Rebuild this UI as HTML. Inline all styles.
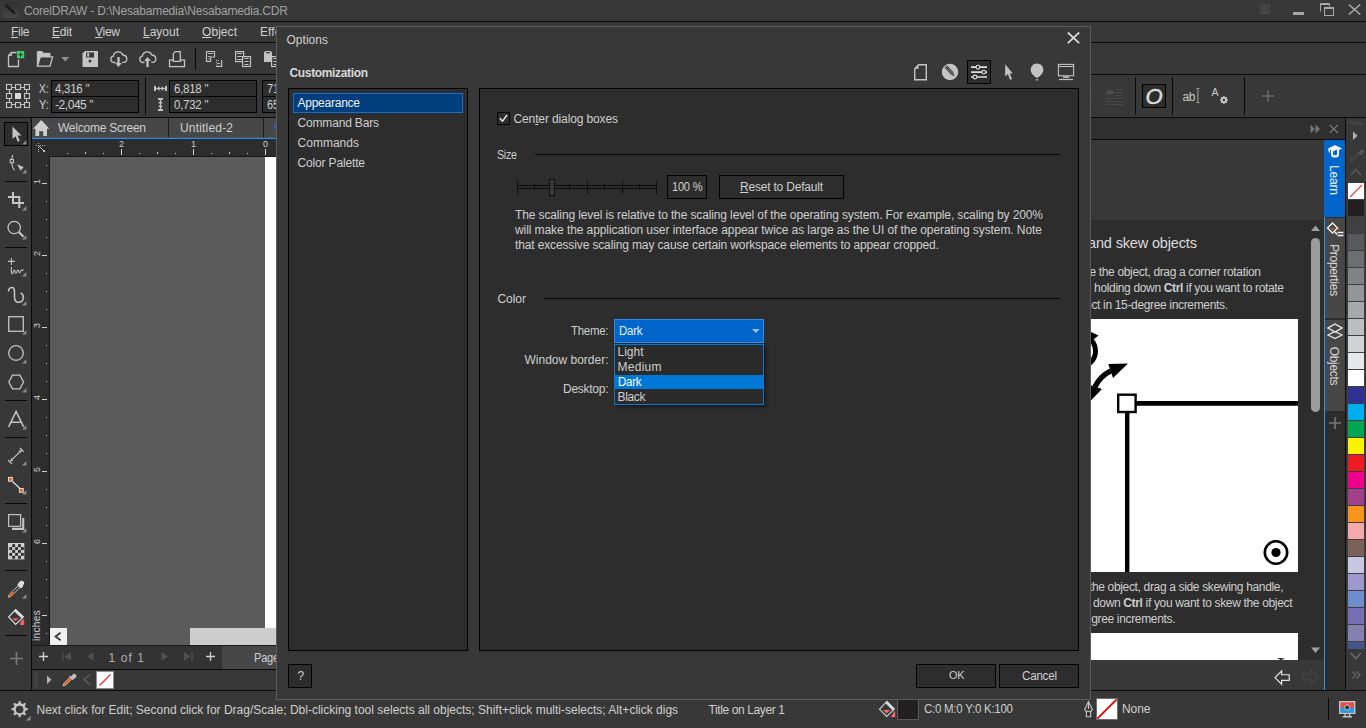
<!DOCTYPE html>
<html lang="en"><head><meta charset="utf-8"><title>CorelDRAW Options</title>
<style>

*{margin:0;padding:0;box-sizing:border-box}
html,body{width:1366px;height:728px;overflow:hidden;background:#383838;font-family:"Liberation Sans",sans-serif;font-size:12px;color:#d4d4d4}
.a{position:absolute}
.t{position:absolute;white-space:nowrap;line-height:1}
.ln{position:absolute;background:#0a0a0a}
.box{position:absolute;border:1px solid #020202;background:#2d2d2d}
svg{position:absolute;overflow:visible}
u{text-decoration:underline;text-underline-offset:1px}
#dlg{position:absolute;left:277px;top:27px;width:814px;height:672px;background:#383838;border:1px solid #5c5c5c}
#docker{position:absolute;left:1091px;top:118px;width:234px;height:572px;overflow:hidden}

</style></head>
<body>

<div class="a" id="app" style="left:0;top:0;width:1366px;height:728px">
<!-- horizontal separators -->
<div class="ln" style="left:0;top:21px;width:1366px;height:1px"></div>
<div class="ln" style="left:0;top:42px;width:1366px;height:1px"></div>
<div class="ln" style="left:0;top:74px;width:1366px;height:1px"></div>
<div class="ln" style="left:0;top:117px;width:1366px;height:1px"></div>
<div class="ln" style="left:0;top:690px;width:1366px;height:1px"></div>
<!-- title bar icon -->
<svg style="left:3px;top:2px" width="16" height="16" viewBox="0 0 16 16"><defs><linearGradient id="ig" x1="0" y1="0" x2="0" y2="1"><stop offset="0" stop-color="#2f2f2f"/><stop offset="1" stop-color="#484848"/></linearGradient></defs><path d="M4 0.200h11.600v11.800a3.800 3.800 0 0 1-3.800 3.800h-7.800a3.800 3.800 0 0 1-3.800-3.800v-8a3.800 3.800 0 0 1 3.800-3.800z" fill="url(#ig)"/><path d="M3.800 3.900l7.200 6.900" stroke="#1b1b1b" stroke-width="2.600" stroke-linecap="round"/></svg>
<!-- window controls -->
<svg style="left:1260px;top:4px" width="11" height="11" viewBox="0 0 11 11"><rect x="0.5" y="0.5" width="9" height="9" fill="#404040" stroke="#474747"/><circle cx="4.5" cy="4" r="1.5" fill="#4c4c4c"/><path d="M1.5 9c0-3 6-3 6 0z" fill="#4c4c4c"/></svg>
<div class="a" style="left:1293px;top:12px;width:11px;height:3px;background:#a6a6a6"></div>
<svg style="left:1320px;top:3px" width="14" height="13" viewBox="0 0 14 13"><path d="M0.5 8.5v-8h9v3M0.5 1.5h9" fill="none" stroke="#a8a8a8" stroke-width="1"/><path d="M0.5 1.2h9" stroke="#a8a8a8" stroke-width="1.6"/><rect x="4.5" y="4.5" width="9" height="8" fill="#383838" stroke="#a8a8a8"/><path d="M4.5 5.2h9" stroke="#a8a8a8" stroke-width="1.6"/></svg>
<svg style="left:1348px;top:4px" width="13" height="11" viewBox="0 0 13 11"><path d="M0.8 0.5l11.4 10M12.2 0.5l-11.4 10" stroke="#ababab" stroke-width="1.600" fill="none"/></svg>

<!-- new -->
<svg style="left:7px;top:50px" width="18" height="18" viewBox="0 0 18 18"><path d="M9.5 2.500h-5l-3 3v11h10v-7" fill="none" stroke="#c4c4c4" stroke-width="1.300"/><path d="M1.500 5.500h3v-3" fill="none" stroke="#c4c4c4" stroke-width="1"/><rect x="10" y="1" width="7.200" height="7.200" fill="#3bd66c"/><path d="M13.600 2.300v4.600M11.300 4.600h4.600" stroke="#1c3a26" stroke-width="1.100"/></svg>
<!-- open -->
<svg style="left:36px;top:50px" width="18" height="18" viewBox="0 0 18 18"><path d="M1.300 16.300v-14.800h4.700l1.700 1.800h6.300v3.500" fill="#c6c6c6" stroke="#c4c4c4" stroke-width="1"/><path d="M1.500 16.200l2.800-9.300h12.300l-2.600 9.300z" fill="#383838" stroke="#c4c4c4" stroke-width="1.300"/></svg>
<svg style="left:61px;top:57px" width="9" height="5" viewBox="0 0 9 5"><path d="M0 0h8.4l-4.2 4.4z" fill="#8e8e8e"/></svg>
<!-- save -->
<svg style="left:82px;top:50px" width="17" height="18" viewBox="0 0 17 18"><path d="M3 1h13v16h-15.500v-13.500z" fill="#c4c4c4"/><rect x="4" y="2.5" width="8" height="5" fill="#383838"/><rect x="5.2" y="3.2" width="2" height="3.4" fill="#c4c4c4"/><circle cx="8" cy="11" r="1.5" fill="#383838"/></svg>
<!-- cloud down -->
<svg style="left:110px;top:50px" width="18" height="18" viewBox="0 0 18 18"><path d="M5.5 12.5h-1.8a3.2 3.2 0 0 1-.4-6.3a5 5 0 0 1 9.6-1.2a3.8 3.8 0 0 1 1.3 7.4h-2" fill="none" stroke="#c4c4c4" stroke-width="1.3"/><path d="M8.500 7v7" stroke="#c4c4c4" stroke-width="2.300"/><path d="M5.2 13h6.6l-3.3 4z" fill="#c4c4c4"/></svg>
<!-- cloud up -->
<svg style="left:139px;top:50px" width="18" height="18" viewBox="0 0 18 18"><path d="M5.5 12.5h-1.8a3.2 3.2 0 0 1-.4-6.3a5 5 0 0 1 9.6-1.2a3.8 3.8 0 0 1 1.3 7.4h-2" fill="none" stroke="#c4c4c4" stroke-width="1.3"/><path d="M8.500 10v7" stroke="#c4c4c4" stroke-width="2.300"/><path d="M5.2 11h6.6l-3.3 -4z" fill="#c4c4c4"/></svg>
<!-- print/export -->
<svg style="left:168px;top:50px" width="18" height="18" viewBox="0 0 18 18"><rect x="1.500" y="10" width="15" height="6.600" fill="none" stroke="#c4c4c4" stroke-width="1.300"/><path d="M5.300 11.300v-7.800l2.200-1.900h4.800v9.700z" fill="#383838" stroke="#c4c4c4" stroke-width="1.300"/></svg>
<div class="ln" style="left:195px;top:48px;width:1px;height:22px"></div>
<!-- cut-ish -->
<svg style="left:205px;top:50px" width="18" height="18" viewBox="0 0 18 18"><path d="M1.500 11.500v-10h8v5.500h-4v4.500z" fill="none" stroke="#c4c4c4" stroke-width="1.200"/><path d="M3.200 3.500h4.600M3.200 6.500h2M3.200 9h1.200" stroke="#c4c4c4" stroke-width="1"/><path d="M16.700 10v6.400h-5.700" fill="none" stroke="#c4c4c4" stroke-width="1.200"/><path d="M11 10.500h4M11.500 12v2.500" stroke="#c4c4c4" stroke-width="1" stroke-dasharray="1 1"/><path d="M12 13.500h3" stroke="#c4c4c4" stroke-width="1"/></svg>
<!-- copy -->
<svg style="left:235px;top:50px" width="17" height="18" viewBox="0 0 17 18"><rect x="0.600" y="1.600" width="8" height="10" fill="#383838" stroke="#c4c4c4" stroke-width="1.200"/><path d="M2.300 3.500h4.500M2.300 6.500h4.500M2.300 9.500h4.500" stroke="#c4c4c4" stroke-width="1"/><rect x="7.600" y="6.600" width="7.900" height="9.900" fill="#383838" stroke="#c4c4c4" stroke-width="1.200"/><path d="M9.500 8.500h4.200M9.500 11.500h4.200M9.500 14.500h4.200" stroke="#c4c4c4" stroke-width="1"/></svg>
<!-- paste -->
<svg style="left:264px;top:50px" width="17" height="18" viewBox="0 0 17 18"><path d="M0 3c0-1.500 1-2 4-2s4 .5 4 2v9h-8z" fill="#c4c4c4"/><path d="M2 2.700h4" stroke="#383838" stroke-width="1.200"/><rect x="7.600" y="6.600" width="7.900" height="9.900" fill="#383838" stroke="#c4c4c4" stroke-width="1.200"/><path d="M9.500 8.500h4.200M9.500 11.500h4.200M9.500 14.500h4.200" stroke="#c4c4c4" stroke-width="1"/></svg>

<svg style="left:6px;top:84px" width="25" height="25" viewBox="0 0 25 25"><g fill="#383838" stroke="#c4c4c4" stroke-width="1.100"><path d="M3.500 3.500h17v17h-17z" fill="none" stroke-width="1"/><rect x="0.5" y="0.5" width="5" height="5"/><rect x="9.5" y="0.5" width="5" height="5"/><rect x="18.5" y="0.5" width="5" height="5"/><rect x="0.5" y="9.5" width="5" height="5"/><rect x="9.0" y="9.0" width="6" height="6" fill="#d8d8d8" stroke="none"/><rect x="18.5" y="9.5" width="5" height="5"/><rect x="0.5" y="18.5" width="5" height="5"/><rect x="9.5" y="18.5" width="5" height="5"/><rect x="18.5" y="18.5" width="5" height="5"/></g></svg>
<div class="box" style="left:51px;top:80px;width:88px;height:17px"></div>
<div class="box" style="left:51px;top:96px;width:88px;height:17px"></div>
<div class="ln" style="left:145px;top:77px;width:1px;height:38px"></div>
<svg style="left:154px;top:86px" width="13" height="5" viewBox="0 0 13 5"><path d="M0 0h2v5h-2zM11 0h2v5h-2zM2.200 2.500l3.300-2.300v4.600zM10.800 2.500l-3.300-2.300v4.600z" fill="#c4c4c4"/><path d="M2 2.500h9" stroke="#c4c4c4" stroke-width="1"/></svg>
<svg style="left:158px;top:98px" width="5" height="13" viewBox="0 0 5 13"><path d="M0 0h5v2h-5zM0 11h5v2h-5zM2.500 2.200l-2.300 3.300h4.600zM2.500 10.800l-2.300-3.300h4.600z" fill="#c4c4c4"/><path d="M2.500 2v9" stroke="#c4c4c4" stroke-width="1"/></svg>
<div class="box" style="left:169px;top:80px;width:88px;height:17px"></div>
<div class="box" style="left:169px;top:96px;width:88px;height:17px"></div>
<div class="box" style="left:262px;top:80px;width:40px;height:17px"></div>
<div class="box" style="left:262px;top:96px;width:40px;height:17px"></div>

<div class="ln" style="left:31px;top:118px;width:1px;height:572px"></div>
<div class="box" style="left:4px;top:122px;width:24px;height:24px"></div>
<!-- pick -->
<svg style="left:12px;top:126px" width="10" height="17" viewBox="0 0 10 17"><path d="M0.500 0.500v12.500l3-2.800l2.300 5.600l2-0.900l-2.300-5.400h4z" fill="#c4c4c4"/></svg>
<svg style="left:22.4px;top:140.4px" width="5" height="5" viewBox="0 0 5 5"><path d="M4.400 0v4.400h-4.400z" fill="#8c8c8c"/></svg>
<!-- shape -->
<svg style="left:8px;top:154px" width="20" height="18" viewBox="0 0 20 18"><path d="M4.700 1c-1.800 5-1.200 11 1.800 15.400" fill="none" stroke="#c4c4c4" stroke-width="1.100"/><rect x="2.300" y="5.500" width="3.200" height="3.200" fill="#383838" stroke="#c4c4c4" stroke-width="1.100"/><path d="M9.100 10.300l6.600 2.600l-3.100 3.900z" fill="#c4c4c4"/></svg>
<svg style="left:22.4px;top:169.4px" width="5" height="5" viewBox="0 0 5 5"><path d="M4.400 0v4.400h-4.400z" fill="#8c8c8c"/></svg>
<div class="ln" style="left:5px;top:181px;width:22px;height:1px"></div>
<!-- crop -->
<svg style="left:7px;top:192px" width="18" height="16" viewBox="0 0 18 16"><path d="M6 0v11h11M1 5h11.300v11" fill="none" stroke="#c4c4c4" stroke-width="2"/></svg>
<svg style="left:22.4px;top:206.4px" width="5" height="5" viewBox="0 0 5 5"><path d="M4.400 0v4.400h-4.400z" fill="#8c8c8c"/></svg>
<!-- zoom -->
<svg style="left:7px;top:220px" width="18" height="18" viewBox="0 0 18 18"><circle cx="7.200" cy="7.500" r="6.200" fill="none" stroke="#c4c4c4" stroke-width="1.300"/><path d="M11.800 12l4.700 4.700" stroke="#c4c4c4" stroke-width="2.200"/></svg>
<svg style="left:22.4px;top:235.4px" width="5" height="5" viewBox="0 0 5 5"><path d="M4.400 0v4.400h-4.400z" fill="#8c8c8c"/></svg>
<div class="ln" style="left:5px;top:247px;width:22px;height:1px"></div>
<!-- freehand -->
<svg style="left:8px;top:258px" width="18" height="18" viewBox="0 0 18 18"><path d="M3.400 0v7M0 3.400h7" stroke="#c4c4c4" stroke-width="1.100"/><path d="M3.400 9v5.500c0 1.600 1.700 1.600 1.800 0c.1-3 1.800-3 1.900-.5c.1 1.600 1.500 1.600 1.700 0c.3-2.600 1.800-2.600 2 -.3c.2 1.300 1.400 1.300 1.700 0c.4-2 1.700-2.300 3-1.200" fill="none" stroke="#c4c4c4" stroke-width="1.100"/></svg>
<svg style="left:22.4px;top:272.4px" width="5" height="5" viewBox="0 0 5 5"><path d="M4.400 0v4.400h-4.400z" fill="#8c8c8c"/></svg>
<!-- artistic media -->
<svg style="left:8px;top:287px" width="17" height="18" viewBox="0 0 17 18"><path d="M0.500 4.500C0.500 1.500 2.500 0.500 4 0.500C6 0.500 6.500 3 6.500 5L6.500 10C6.500 13.500 8 15.300 10.500 15.300C13.500 15.300 15.300 13 15.300 10.500C15.300 8 14 6.500 12.600 6" fill="none" stroke="#c4c4c4" stroke-width="1.600"/></svg>
<svg style="left:22.4px;top:301.4px" width="5" height="5" viewBox="0 0 5 5"><path d="M4.400 0v4.400h-4.400z" fill="#8c8c8c"/></svg>
<!-- rectangle -->
<svg style="left:8px;top:316px" width="16" height="16" viewBox="0 0 16 16"><rect x="0.700" y="0.700" width="14.600" height="14.600" fill="none" stroke="#c4c4c4" stroke-width="1.300"/></svg>
<svg style="left:22.4px;top:330.4px" width="5" height="5" viewBox="0 0 5 5"><path d="M4.400 0v4.400h-4.400z" fill="#8c8c8c"/></svg>
<!-- ellipse -->
<svg style="left:8px;top:345px" width="17" height="17" viewBox="0 0 17 17"><circle cx="8" cy="8" r="7.300" fill="none" stroke="#c4c4c4" stroke-width="1.300"/></svg>
<svg style="left:22.4px;top:359.4px" width="5" height="5" viewBox="0 0 5 5"><path d="M4.400 0v4.400h-4.400z" fill="#8c8c8c"/></svg>
<!-- polygon -->
<svg style="left:8px;top:374px" width="17" height="17" viewBox="0 0 17 17"><path d="M0.800 8l3.700-6.800h7.400l3.700 6.800l-3.700 6.800h-7.400z" fill="none" stroke="#c4c4c4" stroke-width="1.300"/></svg>
<svg style="left:22.4px;top:388.4px" width="5" height="5" viewBox="0 0 5 5"><path d="M4.400 0v4.400h-4.400z" fill="#8c8c8c"/></svg>
<div class="ln" style="left:5px;top:400px;width:22px;height:1px"></div>
<!-- text -->
<svg style="left:8px;top:411px" width="17" height="18" viewBox="0 0 17 18"><path d="M0.600 15.800l7.500-15.400l7.500 15.400M3.200 11.300h10" fill="none" stroke="#c4c4c4" stroke-width="1.500"/></svg>
<svg style="left:22.4px;top:425.4px" width="5" height="5" viewBox="0 0 5 5"><path d="M4.400 0v4.400h-4.400z" fill="#8c8c8c"/></svg>
<div class="ln" style="left:5px;top:437px;width:22px;height:1px"></div>
<!-- dimension -->
<svg style="left:8px;top:447px" width="17" height="18" viewBox="0 0 17 18"><path d="M2.500 14.100l11-11" stroke="#c4c4c4" stroke-width="1.200"/><path d="M0.100 13.200l3.800 3.500M12 1l3.700 3.900" stroke="#c4c4c4" stroke-width="1.300"/><path d="M2.500 14.100l.6-3l2.400 2.400zM13.500 3.100l-.6 3l-2.400-2.400z" fill="#c4c4c4"/></svg>
<svg style="left:22.4px;top:461.4px" width="5" height="5" viewBox="0 0 5 5"><path d="M4.400 0v4.400h-4.400z" fill="#8c8c8c"/></svg>
<!-- connector -->
<svg style="left:8px;top:476px" width="17" height="18" viewBox="0 0 17 18"><path d="M4.500 5.500l7.500 7" stroke="#e0e0e0" stroke-width="1.200"/><rect x="0.600" y="1.400" width="3.800" height="3.800" fill="#f25a0c" stroke="#e0e0e0" stroke-width="1"/><rect x="11.400" y="12.500" width="3.800" height="3.800" fill="#f25a0c" stroke="#e0e0e0" stroke-width="1"/></svg>
<svg style="left:22.4px;top:490.4px" width="5" height="5" viewBox="0 0 5 5"><path d="M4.400 0v4.400h-4.400z" fill="#8c8c8c"/></svg>
<div class="ln" style="left:5px;top:503px;width:22px;height:1px"></div>
<!-- shadow -->
<svg style="left:7.900px;top:514.100px" width="17" height="16" viewBox="0 0 17 16"><path d="M15.200 3.900v10.950h-11.200" fill="none" stroke="#c4c4c4" stroke-width="2.100"/><rect x="0.600" y="0.600" width="12" height="11.700" fill="#383838" stroke="#c4c4c4" stroke-width="1.200"/></svg>
<svg style="left:22.4px;top:528.4px" width="5" height="5" viewBox="0 0 5 5"><path d="M4.400 0v4.400h-4.400z" fill="#8c8c8c"/></svg>
<!-- transparency -->
<svg style="left:7.900px;top:542.800px" width="17" height="17" viewBox="0 0 17 17"><rect x="0" y="0" width="16.300" height="16.400" fill="#cfcfcf"/><g fill="#2e2e2e"><rect x="4.20" y="1.20" width="2.900" height="2.900"/><rect x="10.00" y="1.20" width="2.900" height="2.900"/><rect x="1.30" y="4.10" width="2.900" height="2.900"/><rect x="7.10" y="4.10" width="2.900" height="2.900"/><rect x="12.90" y="4.10" width="2.900" height="2.900"/><rect x="4.20" y="7.00" width="2.900" height="2.900"/><rect x="10.00" y="7.00" width="2.900" height="2.900"/><rect x="1.30" y="9.90" width="2.900" height="2.900"/><rect x="7.10" y="9.90" width="2.900" height="2.900"/><rect x="12.90" y="9.90" width="2.900" height="2.900"/><rect x="4.20" y="12.80" width="2.900" height="2.900"/><rect x="10.00" y="12.80" width="2.900" height="2.900"/></g></svg>
<div class="ln" style="left:5px;top:570px;width:22px;height:1px"></div>
<!-- eyedropper -->
<svg style="left:8px;top:580px" width="17" height="18" viewBox="0 0 17 18"><path d="M0.400 17.200l.8-2.600l8.800-8.800l1.800 1.800l-8.800 8.800z" fill="#383838" stroke="#dedede" stroke-width=".9"/><path d="M0.900 16.700l.7-2l3.200-3.200l1.400 1.400l-3.200 3.200z" fill="#f25a0c"/><path d="M9.300 4.500l3-3.400c1.500-1 3.800 0 3.900 1.500c.1 1.200-.5 1.800-1 2.300l-.2 1.500l-2 2z" fill="#dedede"/></svg>
<svg style="left:22.4px;top:594.4px" width="5" height="5" viewBox="0 0 5 5"><path d="M4.400 0v4.400h-4.400z" fill="#8c8c8c"/></svg>
<!-- fill -->
<svg style="left:8px;top:609px" width="18" height="19" viewBox="0 0 18 19"><path d="M7.600 0.600l7.700 7.400l-7.700 7.400l-7-7.400z" fill="none" stroke="#dcdcdc" stroke-width="1.100"/><path d="M7 1.200l7.800 7.400" stroke="#dcdcdc" stroke-width="2.800"/><path d="M3.900 9.200h7l-3.500 2.800z" fill="#f26464"/><path d="M12.400 12.800l3.800-3.300v6.500h-4.200z" fill="#f26464"/></svg>
<div class="ln" style="left:5px;top:635px;width:22px;height:1px"></div>
<svg style="left:10px;top:652px" width="13" height="13" viewBox="0 0 13 13"><path d="M6.500 0v13M0 6.500h13" stroke="#777" stroke-width="1.700"/></svg>

<!-- tab row -->
<div class="a" style="left:32px;top:118px;width:251px;height:20px;background:#474747"></div>
<div class="a" style="left:168px;top:118px;width:1px;height:21px;background:#1c1c1c"></div>
<div class="a" style="left:263px;top:118px;width:1px;height:21px;background:#1c1c1c"></div>
<div class="a" style="left:32px;top:138px;width:251px;height:1px;background:#2c8ae8"></div>
<div class="a" style="left:32px;top:137px;width:251px;height:1px;background:#3a6ea8;opacity:.4"></div>
<div class="a" style="left:274px;top:123px;width:2px;height:6px;background:#3d5e9e"></div>
<svg style="left:33px;top:120px" width="17" height="16" viewBox="0 0 17 16"><path d="M8.200 0l8.200 8.800h-2.400v7.200h-3.800v-4.800h-4v4.800h-3.800v-7.200h-2.400z" fill="#cdcdcd"/></svg>
<!-- rulers -->
<div class="a" style="left:32px;top:139px;width:251px;height:17px;background:#2d2d2d"></div>
<div class="a" style="left:32px;top:139px;width:17px;height:507px;background:#2d2d2d"></div>
<div class="a" style="left:49px;top:156px;width:234px;height:1px;background:#161616"></div>
<div class="a" style="left:49px;top:156px;width:1px;height:490px;background:#161616"></div>
<svg style="left:36px;top:143px" width="11" height="11" viewBox="0 0 11 11"><path d="M2.500 0v10M0 2.500h10" stroke="#a8a8a8" stroke-width="1" stroke-dasharray="1 1"/><path d="M2.500 2.500l5 5" stroke="#c4c4c4" stroke-width="1"/><rect x="7" y="7" width="2" height="2" fill="#c4c4c4"/></svg>
<!-- canvas -->
<div class="a" style="left:50px;top:157px;width:233px;height:471px;background:#5b5b5b"></div>
<div class="a" style="left:265px;top:157px;width:18px;height:471px;background:#fff"></div>
<!-- h scrollbar -->
<div class="a" style="left:50px;top:628px;width:233px;height:17px;background:#5b5b5b"></div>
<div class="a" style="left:50px;top:628px;width:17px;height:17px;background:#f0f0f0"></div>
<svg style="left:54px;top:632px" width="8" height="9" viewBox="0 0 8 9"><path d="M6.500 0.800l-5 3.700l5 3.700" fill="none" stroke="#333" stroke-width="1.700"/></svg>
<div class="a" style="left:190px;top:628px;width:93px;height:17px;background:#cdcdcd"></div>
<div class="ln" style="left:32px;top:645px;width:251px;height:1px;background:#1a1a1a"></div>
<!-- page nav -->
<div class="a" style="left:32px;top:646px;width:190px;height:23px;background:#333"></div>
<div class="a" style="left:222px;top:646px;width:60px;height:23px;background:#474747"></div>
<div class="ln" style="left:32px;top:669px;width:251px;height:1px"></div>
<svg style="left:39px;top:652px" width="10" height="10" viewBox="0 0 10 10"><path d="M4.500 0v9M0 4.500h9" stroke="#d0d0d0" stroke-width="1.300"/></svg>
<svg style="left:62px;top:652px" width="10" height="10" viewBox="0 0 10 10"><path d="M1 0v9" stroke="#505050" stroke-width="1.300"/><path d="M9 0v9l-6.500-4.500z" fill="#505050"/></svg>
<svg style="left:87px;top:652px" width="7" height="10" viewBox="0 0 7 10"><path d="M6.500 0v9l-6.500-4.500z" fill="#505050"/></svg>
<svg style="left:161px;top:652px" width="7" height="10" viewBox="0 0 7 10"><path d="M0.500 0v9l6.500-4.500z" fill="#505050"/></svg>
<svg style="left:183px;top:652px" width="10" height="10" viewBox="0 0 10 10"><path d="M9 0v9" stroke="#505050" stroke-width="1.300"/><path d="M1 0v9l6.500-4.500z" fill="#505050"/></svg>
<svg style="left:206px;top:652px" width="10" height="10" viewBox="0 0 10 10"><path d="M4.500 0v9M0 4.500h9" stroke="#d0d0d0" stroke-width="1.300"/></svg>
<!-- document palette row -->
<svg style="left:34px;top:672px" width="5" height="16" viewBox="0 0 5 16"><path d="M1 0v16M3 1v15" stroke="#5a5a5a" stroke-width="1" stroke-dasharray="1 1"/></svg>
<svg style="left:47px;top:675px" width="5" height="10" viewBox="0 0 5 10"><path d="M0 0.500l4.500 4.300l-4.500 4.300z" fill="#b4b4b4"/></svg>
<svg style="left:62px;top:673px" width="14" height="14" viewBox="0 0 14 14"><path d="M1 13l0.800-2.600l6-6l1.800 1.800l-6 6z" fill="#e8641b" stroke="#bdbdbd" stroke-width=".9"/><path d="M7.500 3l3.500 3.500M9 5l2.500-3.200a1.500 1.500 0 0 1 2 2l-3.200 2.500" fill="#bdbdbd" stroke="#bdbdbd" stroke-width="1.500"/></svg>
<svg style="left:83px;top:674px" width="8" height="11" viewBox="0 0 8 11"><path d="M7 0.500l-6 5l6 5" fill="none" stroke="#5c5c5c" stroke-width="1.500"/></svg>
<div class="a" style="left:96px;top:671px;width:18px;height:18px;background:#fff;border:1px solid #8a8a8a"></div>
<svg style="left:97px;top:672px" width="16" height="16" viewBox="0 0 16 16"><path d="M2.500 13.500l11-11" stroke="#ee2a2a" stroke-width="1.200"/></svg>
<div class="a" style="left:66.9px;top:153px;width:1px;height:1px;background:#c4c4c4"></div>
<div class="a" style="left:84.9px;top:152px;width:1px;height:2px;background:#c4c4c4"></div>
<div class="a" style="left:102.9px;top:153px;width:1px;height:1px;background:#c4c4c4"></div>
<div class="a" style="left:120.9px;top:149px;width:1px;height:6px;background:#d0d0d0"></div>
<div class="a" style="left:138.9px;top:153px;width:1px;height:1px;background:#c4c4c4"></div>
<div class="a" style="left:156.9px;top:152px;width:1px;height:2px;background:#c4c4c4"></div>
<div class="a" style="left:174.9px;top:153px;width:1px;height:1px;background:#c4c4c4"></div>
<div class="a" style="left:192.9px;top:149px;width:1px;height:6px;background:#d0d0d0"></div>
<div class="a" style="left:210.9px;top:153px;width:1px;height:1px;background:#c4c4c4"></div>
<div class="a" style="left:228.9px;top:152px;width:1px;height:2px;background:#c4c4c4"></div>
<div class="a" style="left:246.9px;top:153px;width:1px;height:1px;background:#c4c4c4"></div>
<div class="a" style="left:264.9px;top:149px;width:1px;height:6px;background:#d0d0d0"></div>
<div class="a" style="left:46px;top:164.9px;width:1px;height:1px;background:#c4c4c4"></div>
<div class="a" style="left:42px;top:182.9px;width:5px;height:1px;background:#d0d0d0"></div>
<div class="a" style="left:46px;top:200.9px;width:1px;height:1px;background:#c4c4c4"></div>
<div class="a" style="left:46px;top:218.9px;width:1px;height:1px;background:#c4c4c4"></div>
<div class="a" style="left:46px;top:236.9px;width:1px;height:1px;background:#c4c4c4"></div>
<div class="a" style="left:42px;top:254.9px;width:5px;height:1px;background:#d0d0d0"></div>
<div class="a" style="left:46px;top:272.9px;width:1px;height:1px;background:#c4c4c4"></div>
<div class="a" style="left:46px;top:290.9px;width:1px;height:1px;background:#c4c4c4"></div>
<div class="a" style="left:46px;top:308.9px;width:1px;height:1px;background:#c4c4c4"></div>
<div class="a" style="left:42px;top:326.9px;width:5px;height:1px;background:#d0d0d0"></div>
<div class="a" style="left:46px;top:344.9px;width:1px;height:1px;background:#c4c4c4"></div>
<div class="a" style="left:46px;top:362.9px;width:1px;height:1px;background:#c4c4c4"></div>
<div class="a" style="left:46px;top:380.9px;width:1px;height:1px;background:#c4c4c4"></div>
<div class="a" style="left:42px;top:398.9px;width:5px;height:1px;background:#d0d0d0"></div>
<div class="a" style="left:46px;top:416.9px;width:1px;height:1px;background:#c4c4c4"></div>
<div class="a" style="left:46px;top:434.9px;width:1px;height:1px;background:#c4c4c4"></div>
<div class="a" style="left:46px;top:452.9px;width:1px;height:1px;background:#c4c4c4"></div>
<div class="a" style="left:42px;top:470.9px;width:5px;height:1px;background:#d0d0d0"></div>
<div class="a" style="left:46px;top:488.9px;width:1px;height:1px;background:#c4c4c4"></div>
<div class="a" style="left:46px;top:506.9px;width:1px;height:1px;background:#c4c4c4"></div>
<div class="a" style="left:46px;top:524.9px;width:1px;height:1px;background:#c4c4c4"></div>
<div class="a" style="left:42px;top:542.9px;width:5px;height:1px;background:#d0d0d0"></div>
<div class="a" style="left:46px;top:560.9px;width:1px;height:1px;background:#c4c4c4"></div>
<div class="a" style="left:46px;top:578.9px;width:1px;height:1px;background:#c4c4c4"></div>
<div class="a" style="left:46px;top:596.9px;width:1px;height:1px;background:#c4c4c4"></div>
<div class="a" style="left:42px;top:614.9px;width:5px;height:1px;background:#d0d0d0"></div>
<div class="a" style="left:46px;top:632.9px;width:1px;height:1px;background:#c4c4c4"></div>
<div class="a" style="left:1084px;top:118px;width:262px;height:21px;background:#2f2f2f"></div>
<div class="ln" style="left:1084px;top:139px;width:262px;height:1px"></div>
<div class="a" style="left:1084px;top:220px;width:241px;height:440px;background:#2d2d2d"></div>
<div class="a" style="left:1325px;top:140px;width:20px;height:550px;background:#2d2d2d"></div>
<div class="ln" style="left:1345px;top:118px;width:1px;height:572px"></div>
<!-- header buttons -->
<svg style="left:1310px;top:124px" width="11" height="10" viewBox="0 0 11 10"><path d="M0.500 0.500l4.500 4.500l-4.500 4.500zM5.500 0.500l4.500 4.500l-4.500 4.500z" fill="#747474"/></svg>
<svg style="left:1329px;top:124px" width="10" height="10" viewBox="0 0 10 10"><path d="M0.800 0.800l8 8M8.800 0.800l-8 8" stroke="#858585" stroke-width="1.100"/></svg>
<!-- vertical tabs -->
<div class="a" style="left:1324px;top:140px;width:1px;height:550px;background:#3391f0"></div>
<div class="a" style="left:1324px;top:140px;width:21px;height:77px;background:#0066cc"></div>
<div class="a" style="left:1325px;top:218px;width:20px;height:100px;background:#474747"></div>
<div class="a" style="left:1325px;top:320px;width:20px;height:91px;background:#474747"></div>
<svg style="left:1327px;top:144px" width="16" height="16" viewBox="0 0 16 16"><path d="M1 4.500l7-3.500l7 3.500l-3 1.500v6c-2 2-6 2-8 0v-3.500h-2z" fill="#f2f2f2"/><path d="M6 7.500l4-2v5c-1 1-3 1-4 0z" fill="#0066cc"/><path d="M3.500 6v4" stroke="#0066cc" stroke-width="1"/></svg>
<svg style="left:1327px;top:222px" width="17" height="17" viewBox="0 0 17 17"><path d="M5.500 1l5 5l-5 5l-5-5z" fill="none" stroke="#f0f0f0" stroke-width="1.400"/><path d="M3.500 6h4l-2 2z" fill="#e8641b"/><path d="M8 10l2 2.500" stroke="#f0f0f0" stroke-width="1.600"/><path d="M10.500 10.500h6M10.500 13.500h6" stroke="#f0f0f0" stroke-width="1.300"/><path d="M11.500 5.500v2.500" stroke="#e8641b" stroke-width="1.300"/></svg>
<svg style="left:1327px;top:323px" width="17" height="18" viewBox="0 0 17 18"><path d="M8 8.500l7 3.500l-7 3.500l-7-3.500z" fill="none" stroke="#e8e8e8" stroke-width="1.200"/><path d="M8 1l7 4l-7 4l-7-4z" fill="#474747" stroke="#f0f0f0" stroke-width="1.400"/></svg>
<svg style="left:1329px;top:417px" width="12" height="12" viewBox="0 0 12 12"><path d="M6 0v12M0 6h12" stroke="#787878" stroke-width="1.600"/></svg>
<!-- scrollbar -->
<svg style="left:1311px;top:225px" width="10" height="7" viewBox="0 0 10 7"><path d="M0 6h9l-4.500-5.500z" fill="#a0a0a0"/></svg>
<div class="a" style="left:1311px;top:238px;width:9px;height:174px;border-radius:4.500px;background:#9c9c9c"></div>
<svg style="left:1311px;top:647px" width="10" height="7" viewBox="0 0 10 7"><path d="M0 0.500h9l-4.500 5.500z" fill="#a0a0a0"/></svg>
<!-- nav arrows -->
<svg style="left:1274px;top:669.500px" width="16.200" height="15.200" viewBox="0 0 17 16"><path d="M1 8l7-7v4h8v6h-8v4z" fill="none" stroke="#e4e4e4" stroke-width="1.300"/></svg>
<svg style="left:1302px;top:669px" width="17" height="16" viewBox="0 0 17 16"><path d="M16 8l-7-7v4h-8v6h8v4z" fill="none" stroke="#464646" stroke-width="1.200"/></svg>
<!-- illustrations -->
<div class="a" style="left:1084px;top:319px;width:214px;height:253px;background:#fff"></div>
<div class="a" style="left:1084px;top:633px;width:214px;height:27px;background:#fff"></div>
<svg style="left:1084px;top:319px" width="214" height="253" viewBox="0 0 214 253">
<path d="M52 84.400h162" stroke="#000" stroke-width="4.600"/><path d="M43.200 93v160" stroke="#000" stroke-width="4.400"/>
<rect x="34.200" y="75.700" width="17.400" height="17.300" fill="#fff" stroke="#000" stroke-width="2.400"/>
<path d="M10.900 67.700A36 36 0 0 1 26.700 51.900" fill="none" stroke="#000" stroke-width="5.200"/><path d="M44 44.500l-19.700 .5l4.700 14z" fill="#000"/><path d="M3.500 85l.5-19.700l14 4.700z" fill="#000"/>
<circle cx="-4.500" cy="32" r="16" fill="none" stroke="#000" stroke-width="5"/><path d="M5 12l9.500 4.500l-7 5.500z" fill="#000"/>
<circle cx="192" cy="233.500" r="11.200" fill="none" stroke="#000" stroke-width="2.600"/><circle cx="192" cy="233.500" r="4.600" fill="#000"/>
</svg>
<svg style="left:1276px;top:655px" width="10" height="5" viewBox="0 0 10 5"><path d="M1 3l8 0.500l-4 1.500z" fill="#000"/></svg>
<span class="t" style="font-size:14.5px;color:#dcdcdc;top:235.73px;left:1042.32px;letter-spacing:-0.150px;">Rotate and skew objects</span>
<span class="t" style="font-size:12px;color:#cfcfcf;top:265.84px;left:1052.14px;letter-spacing:-0.340px;">To rotate the object, drag a corner rotation</span>
<span class="t" style="font-size:12px;color:#cfcfcf;top:281.84px;left:1054.13px;letter-spacing:-0.340px;">handle, holding down <b>Ctrl</b> if you want to rotate</span>
<span class="t" style="font-size:12px;color:#cfcfcf;top:298.84px;left:1051.44px;letter-spacing:-0.340px;">the object in 15-degree increments.</span>
<span class="t" style="font-size:12px;color:#cfcfcf;top:580.84px;left:1044.99px;letter-spacing:-0.340px;">To skew the object, drag a side skewing handle,</span>
<span class="t" style="font-size:12px;color:#cfcfcf;top:596.84px;left:1053.66px;letter-spacing:-0.340px;">holding down <b>Ctrl</b> if you want to skew the object</span>
<span class="t" style="font-size:12px;color:#cfcfcf;top:612.84px;left:1050.57px;letter-spacing:-0.340px;">in 15-degree increments.</span>
<span class="t" style="font-size:12px;color:#f4f4f4;top:-10.16px;left:0.00px;left:1319px;top:174px;width:30px;text-align:center;transform:rotate(90deg);transform-origin:50% 50%;letter-spacing:-.2px;">Learn</span>
<span class="t" style="font-size:12px;color:#dadada;top:-10.16px;left:0.00px;left:1304px;top:264px;width:60px;text-align:center;transform:rotate(90deg);transform-origin:50% 50%;letter-spacing:-.3px;">Properties</span>
<span class="t" style="font-size:12px;color:#dadada;top:-10.16px;left:0.00px;left:1309px;top:360px;width:50px;text-align:center;transform:rotate(90deg);transform-origin:50% 50%;letter-spacing:-.3px;">Objects</span>
<div class="a" style="left:1346px;top:118px;width:20px;height:572px;background:#383838"></div>
<div class="a" style="left:1347px;top:183px;width:18px;height:466px;background:#3e3e3e"></div>
<div class="a" style="left:1348px;top:183px;width:16px;height:16px;background:#fff"></div><svg style="left:1348px;top:183px" width="16" height="16" viewBox="0 0 16 16"><path d="M2 14l12-12" stroke="#f03a3a" stroke-width="1.100"/></svg>
<div class="a" style="left:1348px;top:200px;width:16px;height:16px;background:#231f20"></div>
<div class="a" style="left:1348px;top:217px;width:16px;height:16px;background:#414042"></div>
<div class="a" style="left:1348px;top:234px;width:16px;height:16px;background:#58595b"></div>
<div class="a" style="left:1348px;top:251px;width:16px;height:16px;background:#6d6e71"></div>
<div class="a" style="left:1348px;top:268px;width:16px;height:16px;background:#808285"></div>
<div class="a" style="left:1348px;top:285px;width:16px;height:16px;background:#939598"></div>
<div class="a" style="left:1348px;top:302px;width:16px;height:16px;background:#a7a9ac"></div>
<div class="a" style="left:1348px;top:319px;width:16px;height:16px;background:#bcbec0"></div>
<div class="a" style="left:1348px;top:336px;width:16px;height:16px;background:#d1d3d4"></div>
<div class="a" style="left:1348px;top:353px;width:16px;height:16px;background:#e6e7e8"></div>
<div class="a" style="left:1348px;top:370px;width:16px;height:16px;background:#ffffff"></div>
<div class="a" style="left:1348px;top:387px;width:16px;height:16px;background:#2e3192"></div>
<div class="a" style="left:1348px;top:404px;width:16px;height:16px;background:#00aeef"></div>
<div class="a" style="left:1348px;top:421px;width:16px;height:16px;background:#00a651"></div>
<div class="a" style="left:1348px;top:438px;width:16px;height:16px;background:#fff200"></div>
<div class="a" style="left:1348px;top:455px;width:16px;height:16px;background:#ed1c24"></div>
<div class="a" style="left:1348px;top:472px;width:16px;height:16px;background:#ec008c"></div>
<div class="a" style="left:1348px;top:489px;width:16px;height:16px;background:#a3408c"></div>
<div class="a" style="left:1348px;top:506px;width:16px;height:16px;background:#f7941d"></div>
<div class="a" style="left:1348px;top:523px;width:16px;height:16px;background:#f5a9ab"></div>
<div class="a" style="left:1348px;top:540px;width:16px;height:16px;background:#7b6259"></div>
<div class="a" style="left:1348px;top:557px;width:16px;height:16px;background:#c9c5e4"></div>
<div class="a" style="left:1348px;top:574px;width:16px;height:16px;background:#9d97cd"></div>
<div class="a" style="left:1348px;top:591px;width:16px;height:16px;background:#6d8dcd"></div>
<div class="a" style="left:1348px;top:608px;width:16px;height:16px;background:#766fb5"></div>
<div class="a" style="left:1348px;top:625px;width:16px;height:16px;background:#8680b0"></div>
<div class="a" style="left:1348px;top:642px;width:16px;height:7px;background:#43568c"></div>
<svg style="left:1349px;top:121px" width="14" height="5" viewBox="0 0 14 5"><path d="M0 1h14M1 3h14" stroke="#5c5c5c" stroke-width="1" stroke-dasharray="1 1"/></svg>
<svg style="left:1353px;top:131px" width="5" height="10" viewBox="0 0 5 10"><path d="M0 0.500l4.500 4.300l-4.500 4.300z" fill="#b4b4b4"/></svg>
<svg style="left:1350px;top:149px" width="13" height="13" viewBox="0 0 13 13"><path d="M1 12l0.800-2.400l5.500-5.500l1.600 1.600l-5.500 5.500z" fill="none" stroke="#555" stroke-width=".9"/><path d="M8.500 4.500l2.500-3a1.400 1.400 0 0 1 2 2l-3 2.500" fill="#555" stroke="#555" stroke-width="1.400"/></svg>
<svg style="left:1350px;top:168px" width="12" height="8" viewBox="0 0 12 8"><path d="M0.800 7l5-5.500l5 5.500" fill="none" stroke="#5a5a5a" stroke-width="1.600"/></svg>
<svg style="left:1350px;top:652px" width="12" height="8" viewBox="0 0 12 8"><path d="M0.800 1l5 5.500l5-5.500" fill="none" stroke="#6a6a6a" stroke-width="1.600"/></svg>
<svg style="left:1352px;top:671px" width="9" height="8" viewBox="0 0 9 8"><path d="M0.500 0.500l3.500 3.500l-3.500 3.500M4.500 0.500l3.500 3.500l-3.500 3.500" fill="none" stroke="#6a6a6a" stroke-width="1.100"/></svg>
<svg style="left:10.600px;top:700.500px" width="19.600" height="19.600" viewBox="0 0 18 18"><path d="M8 0.300l1.500 0l.5 2.100l1.700.7l1.800-1.100l1.100 1.100l-1.100 1.800l.7 1.700l2.100.5v1.500l-2.100.5l-.7 1.700l1.100 1.800l-1.100 1.100l-1.800-1.100l-1.700.7l-.5 2.100h-1.500l-.5-2.100l-1.700-.7l-1.800 1.100l-1.100-1.100l1.100-1.800l-.7-1.700l-2.100-.5v-1.500l2.100-.5l.7-1.700l-1.100-1.800l1.100-1.100l1.800 1.100l1.700-.7z" transform="translate(-.8 -.4)" fill="#c4c4c4"/><circle cx="7.950" cy="7.850" r="3.500" fill="#383838"/><path d="M18 13.500v4.300h-4.300z" fill="#8a8a8a"/></svg>
<!-- fill indicator -->
<svg style="left:878px;top:700px" width="18" height="18" viewBox="0 0 18 18"><path d="M8.700 1.500l7.500 7.800l-7.500 7.200l-7.200-7.200z" fill="none" stroke="#d4d4d4" stroke-width="1.100"/><path d="M8.200 2l7.500 7.400" stroke="#d8d8d8" stroke-width="2.800"/><path d="M5 10h7.200l-3.700 3.500z" fill="#ff6a6a"/><path d="M17.100 10.400v6.600h-4.200z" fill="#ff6a6a"/></svg>
<div class="a" style="left:897px;top:699px;width:22px;height:21px;background:#211f20;border:1px solid #5a5a5a"></div>
<!-- outline indicator -->
<svg style="left:1084px;top:701px" width="9" height="17" viewBox="0 0 9 17"><path d="M4.500 0.500l-3.900 8l1.800 1.900v5.300h4.200v-5.300l1.800-1.900z" fill="none" stroke="#c4c4c4" stroke-width="1.100"/><path d="M4.500 1.500v6.500" stroke="#c4c4c4" stroke-width="1.300"/><path d="M1.500 10.400h6" stroke="#c4c4c4" stroke-width="1"/><rect x="3.500" y="12" width="2" height="2" fill="#222"/></svg>
<div class="a" style="left:1096px;top:698px;width:22px;height:22px;background:#fff;border:1px solid #6a6f6f"></div>
<svg style="left:1097px;top:699px" width="20" height="20" viewBox="0 0 20 20"><path d="M0.300 19.700l19.400-19.400" stroke="#e00000" stroke-width="1.800"/></svg>
<div class="ln" style="left:1328px;top:698px;width:1px;height:22px"></div>
<svg style="left:1339px;top:701px" width="17" height="17" viewBox="0 0 17 17"><rect x="0.700" y="0.700" width="15" height="11.600" fill="#e84a4a" stroke="#c4c4c4" stroke-width="1.400"/><rect x="1.400" y="6.500" width="13.600" height="5.200" fill="#21a0e8"/><circle cx="8.200" cy="6.500" r="2.600" fill="#383838" stroke="#ddd" stroke-width=".8"/><path d="M6 13v2M10.500 13v2M3.500 15.800h9.500" stroke="#c4c4c4" stroke-width="1.400"/></svg>

<svg style="left:1106px;top:88px" width="18" height="17" viewBox="0 0 18 17"><path d="M0 4.500h8l-0 0" stroke="#4c4c4c" stroke-width="3"/><path d="M0 4.500l4-3.500v7z" fill="#4c4c4c"/><path d="M9 1.500h8M9 4.500h8M9 7.500h8M0 10.500h17M0 13.500h17M0 16.500h17" stroke="#484848" stroke-width="1"/></svg>
<svg style="left:1086px;top:88px" width="6" height="17" viewBox="0 0 6 17"><path d="M0 1.500h6M0 4.500h6M0 7.500h6M0 10.500h6M0 13.500h6M0 16.500h6" stroke="#444" stroke-width="1"/></svg>
<div class="ln" style="left:1135px;top:77px;width:1px;height:38px"></div>
<div class="box" style="left:1142px;top:84px;width:24px;height:24px"></div>
<div class="ln" style="left:1172px;top:77px;width:1px;height:38px"></div>
<div class="ln" style="left:1244px;top:77px;width:1px;height:38px"></div>
<svg style="left:1195.700px;top:88.300px" width="3.800" height="15.600" viewBox="0 0 5 17" preserveAspectRatio="none"><path d="M0.500 0.500h1.300c.4 0 .7.300.7.700v14c0 .4-.3.700-.7.700h-1.300M4.500 0.500h-1.300c-.4 0-.7.300-.7.700M4.500 16h-1.300c-.4 0-.7-.300-.7-.700" fill="none" stroke="#c8c8c8" stroke-width=".9"/></svg>
<svg style="left:1219.800px;top:96.200px" width="8.200" height="8.200" viewBox="0 0 11 11"><path d="M4.500 0h1.600l.3 1.300l1 .4l1.100-.7l1.100 1.100l-.7 1.100l.4 1l1.300.3v1.600l-1.300.3l-.4 1l.7 1.100l-1.100 1.100l-1.100-.7l-1 .4l-.3 1.300h-1.600l-.3-1.300l-1-.4l-1.100.7l-1.100-1.100l.7-1.100l-.4-1l-1.300-.3v-1.600l1.300-.3l.4-1l-.7-1.100l1.100-1.100l1.100.7l1-.4z" fill="#c8c8c8"/><circle cx="5.300" cy="5.300" r="1.700" fill="#383838"/></svg>
<svg style="left:1262px;top:90px" width="12" height="12" viewBox="0 0 12 12"><path d="M6 0v12M0 6h12" stroke="#6c6c6c" stroke-width="1.400"/></svg>

<span class="t" style="font-size:12px;color:#a2a2a2;top:4.84px;left:24.00px;letter-spacing:-0.187px;">CorelDRAW - D:\Nesabamedia\Nesabamedia.CDR</span>
<span class="t" style="font-size:12px;color:#cfcfcf;top:25.84px;left:11.00px;letter-spacing:-0.286px;"><u>F</u>ile</span>
<span class="t" style="font-size:12px;color:#cfcfcf;top:25.84px;left:52.00px;letter-spacing:-0.234px;"><u>E</u>dit</span>
<span class="t" style="font-size:12px;color:#cfcfcf;top:25.84px;left:95.00px;letter-spacing:-0.271px;"><u>V</u>iew</span>
<span class="t" style="font-size:12px;color:#cfcfcf;top:25.84px;left:143.00px;letter-spacing:-0.009px;"><u>L</u>ayout</span>
<span class="t" style="font-size:12px;color:#cfcfcf;top:25.84px;left:202.00px;letter-spacing:0.059px;"><u>O</u>bject</span>
<span class="t" style="font-size:12px;color:#cfcfcf;top:25.84px;left:260.00px;letter-spacing:0.086px;">Effe<u>c</u>ts</span>
<span class="t" style="font-size:12px;color:#cfcfcf;top:82.84px;left:39.00px;letter-spacing:-0.250px;transform:scaleX(0.856);transform-origin:0 50%;">X:</span>
<span class="t" style="font-size:12px;color:#cfcfcf;top:98.84px;left:39.00px;letter-spacing:-0.250px;transform:scaleX(0.910);transform-origin:0 50%;">Y:</span>
<span class="t" style="font-size:12px;color:#cfcfcf;top:82.84px;left:55.00px;letter-spacing:-0.250px;transform:scaleX(0.955);transform-origin:0 50%;">4,316 "</span>
<span class="t" style="font-size:12px;color:#cfcfcf;top:98.84px;left:55.00px;letter-spacing:-0.446px;">-2,045 "</span>
<span class="t" style="font-size:12px;color:#cfcfcf;top:82.84px;left:173.50px;letter-spacing:-0.250px;transform:scaleX(0.955);transform-origin:0 50%;">6,818 "</span>
<span class="t" style="font-size:12px;color:#cfcfcf;top:98.84px;left:173.50px;letter-spacing:-0.250px;transform:scaleX(0.955);transform-origin:0 50%;">0,732 "</span>
<span class="t" style="font-size:12px;color:#cfcfcf;top:82.84px;left:266.50px;letter-spacing:-0.250px;transform:scaleX(0.915);transform-origin:0 50%;">71</span>
<span class="t" style="font-size:12px;color:#cfcfcf;top:98.84px;left:266.50px;letter-spacing:-0.250px;transform:scaleX(0.915);transform-origin:0 50%;">65</span>
<span class="t" style="font-size:12px;color:#cfcfcf;top:121.84px;left:58.00px;letter-spacing:-0.243px;">Welcome Screen</span>
<span class="t" style="font-size:12px;color:#cfcfcf;top:121.84px;left:180.00px;letter-spacing:0.182px;">Untitled-2</span>
<span class="t" style="font-size:9px;color:#cfcfcf;top:140.38px;left:119.00px;">2</span>
<span class="t" style="font-size:9px;color:#cfcfcf;top:140.38px;left:191.00px;">1</span>
<span class="t" style="font-size:9px;color:#cfcfcf;top:140.38px;left:263.00px;">0</span>
<span class="t" style="font-size:9px;color:#cfcfcf;top:-7.62px;left:34.00px;top:177.4px;left:33px;width:9px;height:9px;text-align:center;transform:rotate(-90deg);transform-origin:50% 50%;">1</span>
<span class="t" style="font-size:9px;color:#cfcfcf;top:-7.62px;left:34.00px;top:249.4px;left:33px;width:9px;height:9px;text-align:center;transform:rotate(-90deg);transform-origin:50% 50%;">2</span>
<span class="t" style="font-size:9px;color:#cfcfcf;top:-7.62px;left:34.00px;top:321.4px;left:33px;width:9px;height:9px;text-align:center;transform:rotate(-90deg);transform-origin:50% 50%;">3</span>
<span class="t" style="font-size:9px;color:#cfcfcf;top:-7.62px;left:34.00px;top:393.4px;left:33px;width:9px;height:9px;text-align:center;transform:rotate(-90deg);transform-origin:50% 50%;">4</span>
<span class="t" style="font-size:9px;color:#cfcfcf;top:-7.62px;left:34.00px;top:465.4px;left:33px;width:9px;height:9px;text-align:center;transform:rotate(-90deg);transform-origin:50% 50%;">5</span>
<span class="t" style="font-size:9px;color:#cfcfcf;top:-7.62px;left:34.00px;top:537.4px;left:33px;width:9px;height:9px;text-align:center;transform:rotate(-90deg);transform-origin:50% 50%;">6</span>
<span class="t" style="font-size:10px;color:#cfcfcf;top:-8.46px;left:0.00px;top:621px;left:22px;width:30px;height:10px;text-align:center;transform:rotate(-90deg);transform-origin:50% 50%;letter-spacing:.35px;">inches</span>
<span class="t" style="font-size:12px;color:#b0b0b0;top:651.84px;left:108.50px;letter-spacing:1.094px;">1 of 1</span>
<span class="t" style="font-size:12px;color:#cfcfcf;top:651.84px;left:254.00px;letter-spacing:-0.250px;transform:scaleX(0.924);transform-origin:0 50%;">Page 1</span>
<span class="t" style="font-size:12px;color:#cfcfcf;top:703.84px;left:36.50px;letter-spacing:-0.000px;">Next click for Edit; Second click for Drag/Scale; Dbl-clicking tool selects all objects; Shift+click multi-selects; Alt+click digs</span>
<span class="t" style="font-size:12px;color:#cfcfcf;top:703.84px;left:708.50px;letter-spacing:-0.384px;">Title on Layer 1</span>
<span class="t" style="font-size:12px;color:#cfcfcf;top:702.84px;left:923.50px;letter-spacing:-0.250px;transform:scaleX(0.955);transform-origin:0 50%;">C:0 M:0 Y:0 K:100</span>
<span class="t" style="font-size:12px;color:#cfcfcf;top:702.84px;left:1122.00px;letter-spacing:-0.062px;">None</span>
<span class="t" style="font-size:22px;color:#dcdcdc;font-style:italic;top:85.88px;left:1145.50px;-webkit-text-stroke:.5px #dcdcdc;">O</span>
<span class="t" style="font-size:12px;color:#c8c8c8;top:90.84px;left:1182.50px;letter-spacing:-0.359px;">ab</span>
<span class="t" style="font-size:10.5px;color:#c8c8c8;top:87.11px;left:1211.50px;">A</span>
</div>
<div class="a" id="dlg" style="left:276px;top:26px;width:815px;height:674px"></div>
<div class="a" id="dlgc" style="left:0;top:0;width:1366px;height:728px">
<svg style="left:1067px;top:32px" width="13" height="12" viewBox="0 0 13 12"><path d="M0.800 0.500l11.400 10.600M12.200 0.500l-11.400 10.600" stroke="#d6d6d6" stroke-width="1.800" fill="none"/></svg>
<!-- category icons -->
<svg style="left:914px;top:64px" width="14" height="17" viewBox="0 0 14 17"><path d="M4.500 0.700h7.800v15.100h-11.600v-11z" fill="none" stroke="#c4c4c4" stroke-width="1.400"/><path d="M0.700 4.800l3.800-4.100v4.100z" fill="#c4c4c4"/></svg>
<svg style="left:941px;top:63px" width="18" height="18" viewBox="0 0 18 18"><circle cx="9" cy="9" r="8.200" fill="#c4c4c4"/><path d="M4.800 3.500l6.300 6.900" stroke="#4a4a4a" stroke-width="3.600"/><path d="M5.300 2.900l6.300 6.900M4.200 4.100l6.300 6.900" stroke="#8a8a8a" stroke-width=".6"/><path d="M9.700 11.600l3.900 1.900l-1.300-4.200z" fill="#505050"/></svg>
<div class="box" style="left:967px;top:60px;width:24px;height:24px"></div>
<svg style="left:971px;top:64px" width="17" height="16" viewBox="0 0 17 16"><path d="M0 3.200h16M0 8.100h16M0 13h16" stroke="#e0e0e0" stroke-width="1.700"/><g fill="#2d2d2d" stroke="#e0e0e0" stroke-width="1.100"><circle cx="7" cy="3.200" r="1.900"/><circle cx="12.800" cy="8.100" r="1.900"/><circle cx="4" cy="13" r="1.900"/></g></svg>
<svg style="left:1005px;top:64px" width="10" height="17" viewBox="0 0 10 17"><path d="M0.200 0.200v12.300l2.600-2.500l2.300 5.800l1.900-.8l-2.300-5.600h3z" fill="#c4c4c4"/></svg>
<svg style="left:1030px;top:63.400px" width="14" height="18" viewBox="0 0 14 18"><path d="M7 0.500c3.600 0 6.300 2.800 6.300 6.200c0 3.600-3 6.600-6.300 8.300c-3.300-1.700-6.300-4.700-6.300-8.300c0-3.400 2.700-6.200 6.300-6.200z" fill="#c4c4c4"/><path d="M5.800 16.800h2.400" stroke="#c4c4c4" stroke-width="1.200"/></svg>
<svg style="left:1057px;top:63px" width="18" height="18" viewBox="0 0 18 18"><rect x="1.400" y="1.400" width="15.200" height="11.400" fill="none" stroke="#c4c4c4" stroke-width="1.100"/><path d="M1.400 3.500h15.200" stroke="#c4c4c4" stroke-width="1"/><path d="M6.100 13.300h5.900v1.600h-5.900z" fill="#c4c4c4"/><path d="M2 16.500h14" stroke="#c4c4c4" stroke-width="1.200"/></svg>
<!-- panels -->
<div class="box" style="left:288px;top:88px;width:180px;height:563px"></div>
<div class="box" style="left:479px;top:88px;width:600px;height:563px"></div>
<div class="a" style="left:293px;top:93px;width:170px;height:20px;background:#003e7e;border:1px solid #1b6fd0"></div>
<!-- checkbox -->
<div class="a" style="left:497px;top:112px;width:13px;height:13px;background:#2d2d2d;border:1px solid #050505"></div>
<svg style="left:498px;top:113px" width="11" height="11" viewBox="0 0 11 11"><path d="M1.800 5.300l2.700 2.900l4.500-6.200" fill="none" stroke="#f2f2f2" stroke-width="1.400"/></svg>
<!-- group lines -->
<div class="ln" style="left:535px;top:154px;width:525px;height:1px"></div>
<div class="ln" style="left:544px;top:298px;width:516px;height:1px"></div>
<!-- slider -->
<svg style="left:516px;top:179px" width="142" height="17" viewBox="0 0 142 17"><g stroke="#0e0e0e" stroke-width="1" fill="none"><path d="M1 6.500h139.500M1 9.500h139.500"/><path d="M1.500 2v13M36.500 2v13M71.500 2v13M106.500 2v13M140.500 2v13"/><path d="M18.500 5v6M53.500 5v6M88.500 5v6M123.500 5v6"/></g><rect x="33.500" y="0.500" width="5" height="16" fill="#383838" stroke="#0e0e0e"/></svg>
<div class="box" style="left:667px;top:175px;width:40px;height:24px"></div>
<div class="box" style="left:719px;top:175px;width:125px;height:24px"></div>
<!-- combo -->
<div class="a" style="left:614px;top:319px;width:150px;height:24px;background:#0066cc;border:1px solid #2f8cec"></div>
<svg style="left:752px;top:329px" width="8" height="5" viewBox="0 0 8 5"><path d="M0 0h7.600l-3.800 4z" fill="#a9bfd8"/></svg>
<div class="a" style="left:614px;top:344px;width:150px;height:61px;background:#2b2b2b;border:1px solid #0a78d6;box-shadow:2px 2px 3px rgba(0,0,0,.5)"></div>
<div class="a" style="left:615px;top:375px;width:148px;height:14px;background:#0078d7"></div>
<!-- buttons -->
<div class="box" style="left:288px;top:664px;width:24px;height:24px"></div>
<div class="box" style="left:916px;top:664px;width:80px;height:24px"></div>
<div class="box" style="left:999px;top:664px;width:80px;height:24px"></div>
<span class="t" style="font-size:12px;color:#cfcfcf;top:33.84px;left:286.50px;letter-spacing:0.023px;">Options</span>
<span class="t" style="font-size:12px;color:#d8d8d8;font-weight:bold;top:66.84px;left:289.50px;letter-spacing:-0.348px;">Customization</span>
<span class="t" style="font-size:12px;color:#f0f0f0;top:96.84px;left:297.50px;letter-spacing:-0.247px;">Appearance</span>
<span class="t" style="font-size:12px;color:#cfcfcf;top:116.84px;left:297.50px;letter-spacing:-0.170px;">Command Bars</span>
<span class="t" style="font-size:12px;color:#cfcfcf;top:136.84px;left:297.50px;letter-spacing:0.020px;">Commands</span>
<span class="t" style="font-size:12px;color:#cfcfcf;top:156.84px;left:297.50px;letter-spacing:-0.156px;">Color Palette</span>
<span class="t" style="font-size:12px;color:#cfcfcf;top:112.84px;left:513.50px;letter-spacing:-0.125px;">Cen<u>t</u>er dialog boxes</span>
<span class="t" style="font-size:12px;color:#cfcfcf;top:148.84px;left:497.00px;letter-spacing:-0.250px;transform:scaleX(0.885);transform-origin:0 50%;">Size</span>
<span class="t" style="font-size:12px;color:#cfcfcf;top:180.84px;left:671.50px;letter-spacing:-0.250px;transform:scaleX(0.923);transform-origin:0 50%;">100 %</span>
<span class="t" style="font-size:12px;color:#cfcfcf;top:180.84px;left:740.00px;letter-spacing:-0.204px;"><u>R</u>eset to Default</span>
<span class="t" style="font-size:12px;color:#cfcfcf;top:208.84px;left:515.00px;letter-spacing:-0.126px;">The scaling level is relative to the scaling level of the operating system. For example, scaling by 200%</span>
<span class="t" style="font-size:12px;color:#cfcfcf;top:223.84px;left:515.00px;letter-spacing:-0.079px;">will make the application user interface appear twice as large as the UI of the operating system. Note</span>
<span class="t" style="font-size:12px;color:#cfcfcf;top:238.84px;left:515.00px;letter-spacing:-0.133px;">that excessive scaling may cause certain workspace elements to appear cropped.</span>
<span class="t" style="font-size:12px;color:#cfcfcf;top:292.84px;left:497.50px;letter-spacing:-0.047px;">Color</span>
<span class="t" style="font-size:12px;color:#cfcfcf;top:324.84px;left:571.00px;letter-spacing:-0.250px;transform:scaleX(0.951);transform-origin:0 50%;">Theme:</span>
<span class="t" style="font-size:12px;color:#cfcfcf;top:353.84px;left:524.50px;letter-spacing:-0.004px;">Window border:</span>
<span class="t" style="font-size:12px;color:#cfcfcf;top:382.84px;left:563.00px;letter-spacing:-0.266px;">Desktop:</span>
<span class="t" style="font-size:12px;color:#e8eef6;top:324.84px;left:618.50px;letter-spacing:-0.250px;transform:scaleX(0.956);transform-origin:0 50%;">Dark</span>
<span class="t" style="font-size:12px;color:#cfcfcf;top:345.84px;left:617.50px;letter-spacing:-0.008px;">Light</span>
<span class="t" style="font-size:12px;color:#cfcfcf;top:360.84px;left:617.50px;letter-spacing:0.263px;">Medium</span>
<span class="t" style="font-size:12px;color:#ffffff;top:375.84px;left:617.50px;letter-spacing:-0.250px;transform:scaleX(0.956);transform-origin:0 50%;">Dark</span>
<span class="t" style="font-size:12px;color:#cfcfcf;top:390.84px;left:617.50px;letter-spacing:-0.336px;">Black</span>
<span class="t" style="font-size:12px;color:#cfcfcf;top:669.84px;left:297.50px;">?</span>
<span class="t" style="font-size:11.3px;color:#cfcfcf;top:670.43px;left:948.50px;letter-spacing:-0.250px;transform:scaleX(0.964);transform-origin:0 50%;">OK</span>
<span class="t" style="font-size:12px;color:#cfcfcf;top:669.84px;left:1021.50px;letter-spacing:-0.250px;transform:scaleX(0.969);transform-origin:0 50%;">Cancel</span>
</div>

</body></html>
